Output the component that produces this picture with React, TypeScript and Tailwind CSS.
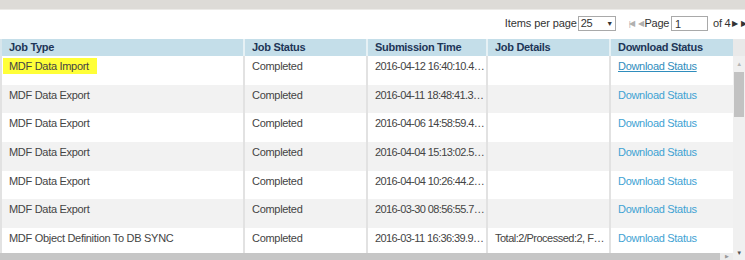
import React from "react";

const rows = [
  { type: "MDF Data Import", status: "Completed", time: "2016-04-12 16:40:10.456 GMT+0800", details: "", hl: true },
  { type: "MDF Data Export", status: "Completed", time: "2016-04-11 18:48:41.332 GMT+0800", details: "" },
  { type: "MDF Data Export", status: "Completed", time: "2016-04-06 14:58:59.412 GMT+0800", details: "" },
  { type: "MDF Data Export", status: "Completed", time: "2016-04-04 15:13:02.521 GMT+0800", details: "" },
  { type: "MDF Data Export", status: "Completed", time: "2016-04-04 10:26:44.219 GMT+0800", details: "" },
  { type: "MDF Data Export", status: "Completed", time: "2016-03-30 08:56:55.703 GMT+0800", details: "" },
  { type: "MDF Object Definition To DB SYNC", status: "Completed", time: "2016-03-11 16:36:39.906 GMT+0800", details: "Total:2/Processed:2, Failed:0" },
];

const cols = ["w-[245px]", "w-[123px]", "w-[120px]", "w-[123px]", "w-[122px]"];

export default function App() {
  return (
    <div className="w-[745px] h-[260px] overflow-hidden bg-white flex flex-col text-[11px] tracking-[-0.3px] text-[#444]" style={{ fontFamily: '"Liberation Sans", Arial, sans-serif' }}>
      {/* top chrome strip */}
      <div className="h-[10px] shrink-0 bg-[#dddbd7] border-b border-[#ecebe8]" />

      {/* pager toolbar */}
      <div className="h-[29px] shrink-0 flex items-center justify-end text-[#333] whitespace-nowrap pb-[2px]">
        <span className="tracking-[-0.1px]">Items per page</span>
        <div className="ml-[1px] w-[38px] h-[15px] border border-[#a9a9a9] flex items-center justify-between px-[2px] leading-none">
          <span>25</span>
          <span className="text-[7px]">▼</span>
        </div>
        <span className="ml-[13px] text-[#b0b0b0] text-[8px] flex items-center">
          <span className="tracking-[-2px]">|◀</span>
          <span className="ml-[5px]">◀</span>
        </span>
        <span className="ml-[1px]">Page</span>
        <div className="ml-[2px] w-[37px] h-[15px] border border-[#a9a9a9] pl-[3px] leading-[14px]">1</div>
        <span className="ml-[5px]">of 4</span>
        <span className="ml-[2px] text-[8px] text-[#333]">▶</span>
        <span className="ml-[3px] text-[8px] text-[#333] tracking-[-2px]">▶|</span>
      </div>

      {/* grid */}
      <div className="flex-1 flex min-h-0">
        <div className="w-[733px] shrink-0 flex flex-col min-h-0">
          <div className="h-[17px] shrink-0 flex bg-[#c4dee9] font-bold text-[#1d3557]">
            {["Job Type", "Job Status", "Submission Time", "Job Details", "Download Status"].map((h, i) => (
              <div key={h} className={`${cols[i]} shrink-0 pl-[7px] leading-[17px] ${i < 4 ? "border-r-2 border-[#e6f1f5]" : ""} ${i === 0 ? "border-l-2 border-l-[#d8e6ec]" : ""}`}>
                {h}
              </div>
            ))}
          </div>
          <div className="flex-1 min-h-0 overflow-hidden">
            {rows.map((r, idx) => (
              <div key={idx} className={`h-[28.67px] flex ${idx % 2 === 1 ? "bg-[#f2f2f2]" : "bg-white"}`}>
                {[r.type, r.status, r.time, r.details].map((v, i) => (
                  <div key={i} className={`${cols[i]} shrink-0 pl-[7px] pt-[4px] leading-[13px] whitespace-nowrap overflow-hidden text-ellipsis border-r-2 border-[#e2e2e2] ${i === 2 ? "pr-0 tracking-[-0.6px]" : i === 3 ? "pr-0 tracking-[-0.5px]" : "pr-[2px]"} ${i === 0 ? "border-l-2 border-l-[#e2e2e2]" : ""}`}>
                    {i === 0 && r.hl ? (
                      <span className="-ml-[6px] pl-[6px] pr-[8px] py-[2px] bg-[#ffff38]">{v}</span>
                    ) : (
                      v
                    )}
                  </div>
                ))}
                <div className={`${cols[4]} shrink-0 pl-[7px] pt-[4px] leading-[13px] whitespace-nowrap`}>
                  <span className={r.hl ? "text-[#2f8dbd] underline" : "text-[#3ea2d3]"}>Download Status</span>
                </div>
              </div>
            ))}
          </div>
          {/* horizontal scrollbar */}
          <div className="h-[7px] shrink-0 bg-[#ececec] flex items-stretch">
            <div className="w-[720px] bg-[#c6c6c6]" />
            <div className="flex-1 flex items-center justify-center text-[5px] text-[#999]">▶</div>
          </div>
        </div>

        {/* vertical scrollbar */}
        <div className="w-[12px] shrink-0 flex flex-col">
          <div className="h-[17px] shrink-0 bg-[#e9e9e9]" />
          <div className="flex-1 bg-[#f0f0f0] flex flex-col items-center">
            <div className="h-[16px] flex items-center text-[6px] text-[#b5b5b5]">▲</div>
            <div className="w-[10px] h-[45px] bg-[#c2c2c2]" />
            <div className="flex-1" />
            <div className="h-[14px] flex items-center text-[6px] text-[#555]">▼</div>
          </div>
        </div>
      </div>
    </div>
  );
}
